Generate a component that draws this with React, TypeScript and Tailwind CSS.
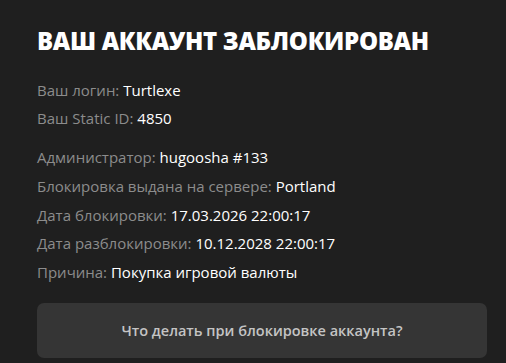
export default function App() {
  const first = [
    { label: "Ваш логин:", value: "Turtlexe" },
    { label: "Ваш Static ID:", value: "4850" },
  ];
  const second = [
    { label: "Администратор:", value: "hugoosha #133" },
    { label: "Блокировка выдана на сервере:", value: "Portland" },
    { label: "Дата блокировки:", value: "17.03.2026 22:00:17" },
    { label: "Дата разблокировки:", value: "10.12.2028 22:00:17" },
    { label: "Причина:", value: "Покупка игровой валюты" },
  ];

  return (
    <div
      className="w-[506px] h-[363px] bg-[#1f1f1f] pl-[37px] pr-[19px] pt-[27px] overflow-hidden"
      style={{ fontFamily: '"Open Sans", "Liberation Sans", sans-serif' }}
    >
      {/* Title */}
      <h1 className="text-[24px] leading-[28px] font-extrabold text-white tracking-[-0.3px]">
        ВАШ АККАУНТ ЗАБЛОКИРОВАН
      </h1>

      {/* Account info */}
      <div className="mt-[25px] flex flex-col gap-[8px]">
        {first.map((row) => (
          <p key={row.label} className="text-[15px] leading-[20px]">
            <span className="text-[#8c8c8c]">{row.label}</span>{" "}
            <span className="text-white font-medium">{row.value}</span>
          </p>
        ))}
      </div>

      {/* Ban details */}
      <div className="mt-[19px] flex flex-col gap-[8.75px]">
        {second.map((row) => (
          <p key={row.label} className="text-[15px] leading-[20px]">
            <span className="text-[#8c8c8c]">{row.label}</span>{" "}
            <span className="text-white font-medium">{row.value}</span>
          </p>
        ))}
      </div>

      <button className="mt-[21px] w-full h-[55px] rounded-[7px] bg-[#353535] text-[#c4c4c4] text-[14.5px] font-semibold flex items-center justify-center">
        Что делать при блокировке аккаунта?
      </button>
    </div>
  );
}
